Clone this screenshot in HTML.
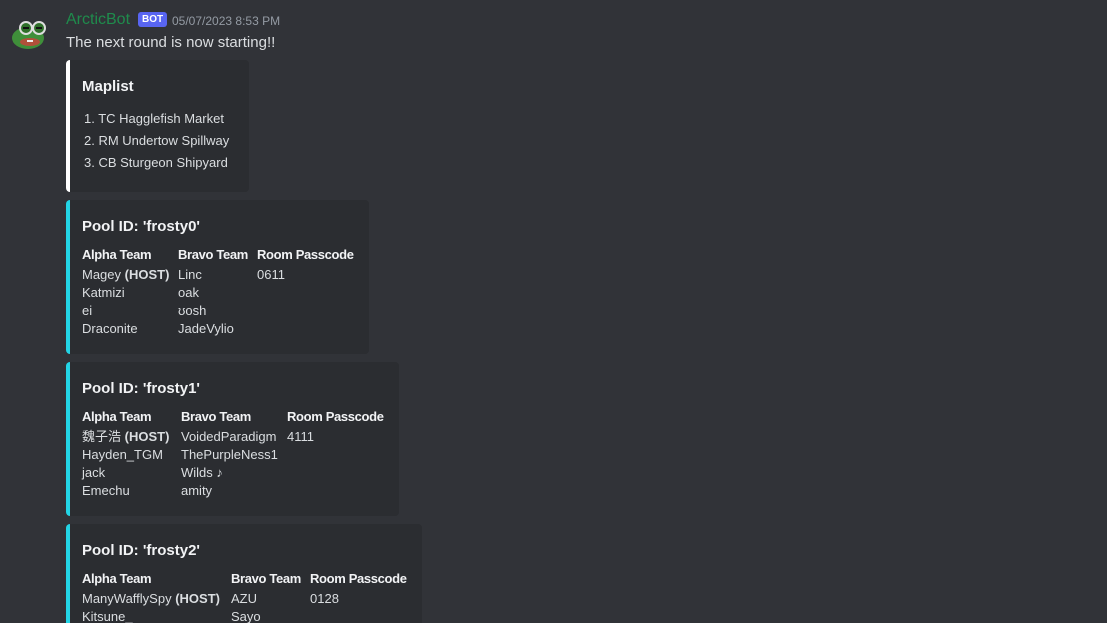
<!DOCTYPE html>
<html style="overflow:hidden;height:623px"><head><meta charset="utf-8"><style>
body{margin:0;width:1107px;height:623px;background:#313338;overflow:hidden;font-family:"Liberation Sans","Noto Sans CJK SC",sans-serif;color:#dbdee1;position:relative}
.a{position:absolute;white-space:nowrap}
.e{position:absolute;left:66px;background:#2b2d31;border-radius:4px;border-left:4px solid #23d5e6}
.t{font-weight:bold;font-size:15px;color:#f2f3f5}
.h{font-weight:bold;font-size:13px;color:#f2f3f5;letter-spacing:-0.35px}
.r{font-size:13px;line-height:18px}
</style></head><body>
<svg class="a" style="left:10px;top:16px" width="40" height="36" viewBox="0 0 40 36">
<ellipse cx="18" cy="22" rx="16" ry="11" fill="#3f8f3a"/>
<ellipse cx="20" cy="26" rx="10" ry="4" fill="#b0503a"/>
<rect x="17" y="24" width="6" height="2" fill="#eee"/>
<circle cx="16" cy="12" r="6" fill="#2f6f2a" stroke="#ddd" stroke-width="2"/>
<circle cx="29" cy="12" r="6" fill="#2f6f2a" stroke="#ddd" stroke-width="2"/>
<rect x="13" y="11" width="6" height="2" fill="#111"/><rect x="26" y="11" width="6" height="2" fill="#111"/>
</svg>
<div class="a" style="left:66px;top:11px;font-size:16px;color:#1f8b4c">ArcticBot</div>
<div class="a" style="left:138px;top:12px;background:#5865f2;color:#fff;font-size:10px;font-weight:bold;padding:2px 4px;border-radius:3px;line-height:11px">BOT</div>
<div class="a" style="left:172px;top:14px;font-size:12px;color:#949ba4">05/07/2023 8:53 PM</div>
<div class="a" style="left:66px;top:34px;font-size:15px">The next round is now starting!!</div>

<div class="e" style="top:60px;width:179px;height:132px;border-left-color:#fff"></div>
<div class="a t" style="left:82px;top:78px">Maplist</div>
<div class="a r" style="left:84px;top:110px">1. TC Hagglefish Market</div>
<div class="a r" style="left:84px;top:132px">2. RM Undertow Spillway</div>
<div class="a r" style="left:84px;top:154px">3. CB Sturgeon Shipyard</div>

<div class="e" style="top:200px;width:299px;height:154px"></div>
<div class="a t" style="left:82px;top:218px">Pool ID: 'frosty0'</div>
<div class="a h" style="left:82px;top:247px">Alpha Team</div><div class="a h" style="left:178px;top:247px">Bravo Team</div><div class="a h" style="left:257px;top:247px">Room Passcode</div>
<div class="a r" style="left:82px;top:266px">Magey <b>(HOST)</b><br>Katmizi<br>ei<br>Draconite</div>
<div class="a r" style="left:178px;top:266px">Linc<br>oak<br>ʊosh<br>JadeVylio</div>
<div class="a r" style="left:257px;top:266px">0611</div>

<div class="e" style="top:362px;width:329px;height:154px"></div>
<div class="a t" style="left:82px;top:380px">Pool ID: 'frosty1'</div>
<div class="a h" style="left:82px;top:409px">Alpha Team</div><div class="a h" style="left:181px;top:409px">Bravo Team</div><div class="a h" style="left:287px;top:409px">Room Passcode</div>
<div class="a r" style="left:82px;top:428px">魏子浩 <b>(HOST)</b><br>Hayden_TGM<br>jack<br>Emechu</div>
<div class="a r" style="left:181px;top:428px">VoidedParadigm<br>ThePurpleNess1<br>Wilds ♪<br>amity</div>
<div class="a r" style="left:287px;top:428px">4111</div>

<div class="e" style="top:524px;width:352px;height:120px"></div>
<div class="a t" style="left:82px;top:542px">Pool ID: 'frosty2'</div>
<div class="a h" style="left:82px;top:571px">Alpha Team</div><div class="a h" style="left:231px;top:571px">Bravo Team</div><div class="a h" style="left:310px;top:571px">Room Passcode</div>
<div class="a r" style="left:82px;top:590px">ManyWafflySpy <b>(HOST)</b><br>Kitsune_</div>
<div class="a r" style="left:231px;top:590px">AZU<br>Sayo</div>
<div class="a r" style="left:310px;top:590px">0128</div>
</body></html>
